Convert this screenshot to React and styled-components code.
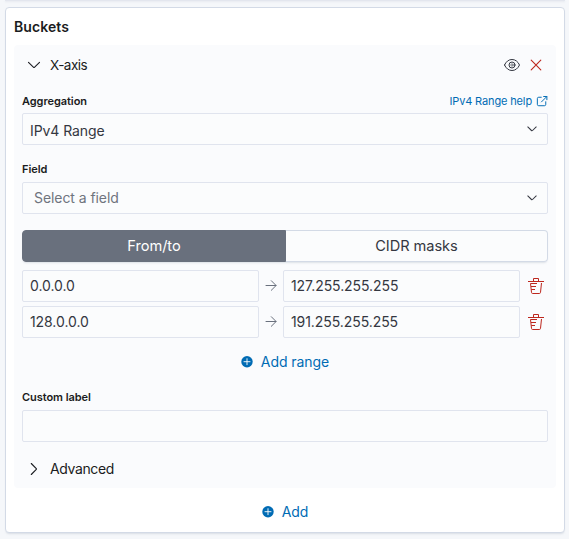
import React from 'react';
import styled, { createGlobalStyle } from 'styled-components';

const GlobalStyle = createGlobalStyle`
  *, *::before, *::after { box-sizing: border-box; }
  body {
    margin: 0;
    height: 539px;
    overflow: hidden;
    background: #f5f7fa;
    color: #343741;
    font: 400 14px/20px Inter, "Liberation Sans", sans-serif;
    letter-spacing: -0.07px;
  }
  button, input { font: inherit; letter-spacing: inherit; color: inherit; }
`;

const Page = styled.main`
  height: 539px;
  padding: 0 4px 0 5px;
`;

const PreviousPanel = styled.div`
  height: 1px;
  margin-bottom: 6px;
  background: #e3e6ee;
  box-shadow: 0 1px 2px rgba(152, 162, 179, 0.2);
`;

const Panel = styled.section`
  height: 526px;
  padding: 8px;
  background: #fff;
  border: 1px solid #d3dae6;
  border-radius: 4px;
  box-shadow: 0 2px 2px -1px rgba(152, 162, 179, 0.3);
`;

const Title = styled.h3`
  margin: 0 0 9px;
  padding-top: 1px;
  font-size: 14px;
  line-height: 19px;
  font-weight: 600;
  letter-spacing: 0.08px;
  color: #1a1c21;
`;

const Bucket = styled.div`
  height: 443px;
  padding: 8px;
  border-radius: 4px;
  background: #fafbfd;
`;

const AccordionHeader = styled.div`
  display: flex;
  align-items: center;
  height: 24px;
  padding: 0 4px;
  color: #1a1c21;
  span { flex: 1; margin-left: 8px; font-size: 13.5px; letter-spacing: -0.55px; }
`;

const Actions = styled.div`
  display: flex;
  gap: 8px;
`;

const LabelRow = styled.div`
  display: flex;
  align-items: center;
  justify-content: space-between;
  height: 18px;
  margin: ${p => p.$top}px 0 ${p => p.$bottom}px;
`;

const Label = styled.label`
  font-size: 11px;
  line-height: 18px;
  font-weight: 600;
  color: #1a1c21;
  letter-spacing: -0.055px;
`;

const HelpLink = styled.a`
  display: flex;
  align-items: center;
  gap: 4px;
  color: #006bb4;
  font-size: 11px;
  line-height: 18px;
  letter-spacing: -0.14px;
`;

const Select = styled.div`
  display: flex;
  align-items: center;
  justify-content: space-between;
  height: 32px;
  padding: ${p => (p.$placeholder ? 0 : 3)}px 9px 0 ${p => (p.$placeholder ? 11 : 7)}px;
  border: 1px solid #e0e4ee;
  border-radius: 2px;
  background: #fbfcfd;
  color: ${p => (p.$placeholder ? '#6f747e' : '#343741')};
  svg { color: #343741; margin-top: ${p => (p.$placeholder ? 0 : -3)}px; }
`;

const TextInput = styled.input`
  width: 100%;
  min-width: 0;
  height: 32px;
  padding: 0 7px 2px;
  border: 1px solid #e0e4ee;
  border-radius: 2px;
  background: #fbfcfd;
  outline: none;
`;

const ButtonGroup = styled.div`
  display: grid;
  grid-template-columns: 264px 1fr;
  height: 32px;
  margin: 16px 0 8px;
  border-radius: 4px;
  box-shadow: 0 2px 2px -1px rgba(152, 162, 179, 0.3);
`;

const Toggle = styled.button`
  border: 1px solid ${p => (p.$selected ? '#69707d' : '#d3dae6')};
  border-left-width: ${p => (p.$selected ? 1 : 0)}px;
  border-radius: ${p => (p.$selected ? '4px 0 0 4px' : '0 4px 4px 0')};
  padding: 0;
  background: ${p => (p.$selected ? '#69707d' : '#fbfcfd')};
  color: ${p => (p.$selected ? '#fff' : '#343741')};
  font-size: 14.6px;
  letter-spacing: -0.05px;
`;

const RangeRow = styled.div`
  display: grid;
  grid-template-columns: 237px 24px 237px 28px;
  align-items: center;
  margin-bottom: 4px;
`;

const IconCell = styled.span`
  display: flex;
  justify-content: center;
  padding-left: ${p => p.$offset || 0}px;
  color: ${p => p.$color};
`;

const AddButton = styled.button`
  display: flex;
  align-items: center;
  justify-content: center;
  gap: 6px;
  width: 100%;
  height: 32px;
  margin-top: 8px;
  padding: 0 2px 0 0;
  border: 0;
  background: transparent;
  color: #006bb4;
`;

const Advanced = styled.div`
  display: flex;
  align-items: center;
  height: 24px;
  margin-top: 15px;
  padding-left: 4px;
  gap: 8px;
  color: #1a1c21;
  letter-spacing: -0.38px;
`;

const Glyph = styled.svg`
  display: block;
  flex: none;
  color: ${p => p.$color || 'currentColor'};
  fill: none;
  stroke: currentColor;
  stroke-width: 1;
  stroke-linecap: ${p => p.$cap || 'round'};
`;

function Icon({ size = 16, color, cap, children }) {
  return (
    <Glyph width={size} height={size} viewBox="0 0 16 16" $color={color} $cap={cap} aria-hidden="true">
      {children}
    </Glyph>
  );
}

const ChevronDown = () => <Icon><path d="M2.5 5.3 7.6 10.3Q8 10.7 8.4 10.3L13.5 5.3" strokeWidth="1.1" /></Icon>;
const ChevronRight = () => <Icon><path d="M5.3 2.5 10.3 7.6Q10.7 8 10.3 8.4L5.3 13.5" strokeWidth="1.1" /></Icon>;
const SelectArrow = () => <Icon size={12}><path d="M2.4 5.3 7.3 10Q8 10.7 8.7 10L13.6 5.3" strokeWidth="1.4" /></Icon>;
const Eye = () => (
  <Icon color="#343741">
    <path d="M.5 8C2.1 4.5 4.7 2.5 8 2.5S13.9 4.5 15.5 8C13.9 11.5 11.3 13.5 8 13.5S2.1 11.5.5 8Z" />
    <circle cx="8" cy="8" r="3" />
    <circle cx="8" cy="8" r="1.2" strokeWidth=".6" />
  </Icon>
);
const Cross = () => <Icon color="#bd271e"><path d="m3.2 3.2 9.6 9.6m0-9.6-9.6 9.6" strokeWidth="1.1" /></Icon>;
const External = () => (
  <Icon size={12}>
    <path d="M7 3H3.6A1.8 1.8 0 0 0 1.8 4.8V12.5A1.8 1.8 0 0 0 3.6 14.3H11.2A1.8 1.8 0 0 0 13 12.5V9M10.2 2H14.5V6.3M14.3 2.2 7.3 9.2" strokeWidth="1.3" />
  </Icon>
);
const ArrowRight = () => <Icon><path d="M3 7.5H13M8.3 2.7 13.1 7.5 8.3 12.3" /></Icon>;
const Trash = () => (
  <Icon cap="butt">
    <path d="M0 3.5H16M5.5 3V.5H10.5V3M2.5 5.5 3.5 14.4Q3.6 15.5 4.7 15.5H11.3Q12.4 15.5 12.5 14.4L13.5 5M2.5 5.5H9M3 8.5H8M3.3 11.5H7" />
  </Icon>
);
const Plus = () => (
  <Icon>
    <circle cx="8" cy="7.7" r="5.7" fill="currentColor" stroke="none" />
    <path d="M8 4.7V10.7M5 7.7H11" stroke="#fff" strokeWidth=".9" />
  </Icon>
);

const ranges = [
  ['0.0.0.0', '127.255.255.255'],
  ['128.0.0.0', '191.255.255.255'],
];

export default function App() {
  return (
    <>
      <GlobalStyle />
      <Page>
        <PreviousPanel />
        <Panel>
          <Title>Buckets</Title>
          <Bucket>
            <AccordionHeader>
              <ChevronDown /><span>X-axis</span>
              <Actions><Eye /><Cross /></Actions>
            </AccordionHeader>
            <LabelRow $top={15} $bottom={3}>
              <Label>Aggregation</Label>
              <HelpLink>IPv4 Range help <External /></HelpLink>
            </LabelRow>
            <Select>IPv4 Range<SelectArrow /></Select>
            <LabelRow $top={15} $bottom={4}><Label>Field</Label></LabelRow>
            <Select $placeholder>Select a field<SelectArrow /></Select>
            <ButtonGroup>
              <Toggle $selected>From/to</Toggle>
              <Toggle>CIDR masks</Toggle>
            </ButtonGroup>
            {ranges.map(([from, to]) => (
              <RangeRow key={from}>
                <TextInput defaultValue={from} aria-label="From" />
                <IconCell $color="#69707d"><ArrowRight /></IconCell>
                <TextInput defaultValue={to} aria-label="To" />
                <IconCell $color="#bd271e" $offset={4}><Trash /></IconCell>
              </RangeRow>
            ))}
            <AddButton><Plus />Add range</AddButton>
            <LabelRow $top={10} $bottom={4}><Label htmlFor="custom-label">Custom label</Label></LabelRow>
            <TextInput id="custom-label" />
            <Advanced><ChevronRight />Advanced</Advanced>
          </Bucket>
          <AddButton><Plus />Add</AddButton>
        </Panel>
      </Page>
    </>
  );
}
